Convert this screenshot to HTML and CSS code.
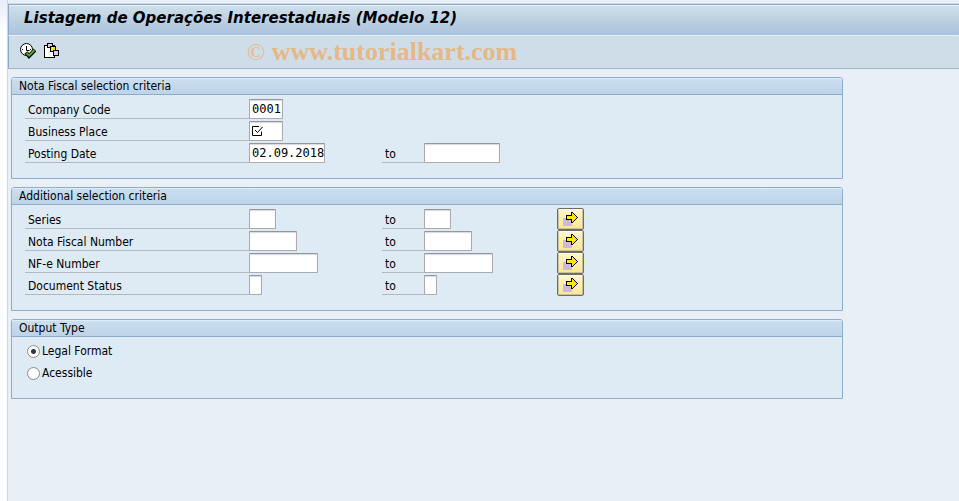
FILE: index.html
```html
<!DOCTYPE html>
<html lang="pt">
<head>
    <meta charset="UTF-8">
    <meta name="viewport" content="width=device-width, initial-scale=1.0">
    <link rel="stylesheet" href="styles.css">
    <title>Listagem de Operações Interestaduais (Modelo 12)</title>
</head>
<body>

    <svg class="defs" aria-hidden="true">
        <symbol id="arrow" viewBox="0 0 15 15" shape-rendering="crispEdges">
            <path fill="#cdb9dc" d="M0 6h9v8h-9z"/>
            <path fill="#000" d="M8 0h2v1h1v1h1v1h1v1h1v1h1v1h-1v1h-1v1h-1v1h-1v1h-1v1h-2v-3h-5v-5h5z"/>
            <path fill="#ffe600" d="M9 1h1v1h1v1h1v1h1v1h1v1h-1v1h-1v1h-1v1h-1v1h-1v-3h-5v-3h5z"/>
        </symbol>
    </svg>

    <div class="window">
        <header class="title-bar">
            <h1>Listagem de Operações Interestaduais (Modelo 12)</h1>
        </header>

        <div class="toolbar">
            <button class="tool-button" aria-label="Execute">
                <svg width="16" height="16" viewBox="0 0 16 16">
                    <circle cx="6.5" cy="6.5" r="6" fill="#fff" stroke="#000"/>
                    <path d="M6.5 3v4.5h3M2 6.500h1M6.5 10v1M10 6.500h1" fill="none" stroke="#000"/>
                    <path d="M6 9.500l3 3.5 6-6" fill="none" stroke="#000" stroke-width="4"/>
                    <path d="M6.500 10l2.500 2.500 5.500-5.500" fill="none" stroke="#4fae26" stroke-width="2"/>
                </svg>
            </button>
            <button class="tool-button" aria-label="Get Variant">
                <svg width="16" height="16" viewBox="0 0 16 16" shape-rendering="crispEdges">
                    <path d="M.5 2.500h10v12h-10z" fill="#fff" stroke="#000"/>
                    <path d="M3.500.5h5v4h-5z" fill="#d5d0e6" stroke="#000"/>
                    <path d="M6.500 3.500h5v5h-5z" fill="#ffe600" stroke="#000"/>
                    <path d="M9.500 7.500h5v5h-5z" fill="#d5d0e6" stroke="#000"/>
                </svg>
            </button>
            <p class="watermark"><span>©</span> www.tutorialkart.com</p>
        </div>

        <main>
            <section class="panel">
                <h2>Nota Fiscal selection criteria</h2>
                <div class="row">
                    <label for="company">Company Code</label>
                    <input id="company" class="w-code" value="0001">
                </div>
                <div class="row">
                    <label for="place">Business Place</label>
                    <div class="required">
                        <input id="place" class="w-code" required>
                        <svg class="required-mark" width="12" height="12" viewBox="0 0 12 12">
                            <path d="M8 1.500h-6.500v9h9v-4" fill="none" stroke="#000"/>
                            <path d="M4 5l2.500 2.500 5-5.500" fill="none" stroke="#000"/>
                        </svg>
                    </div>
                </div>
                <div class="row">
                    <label for="date">Posting Date</label>
                    <input id="date" class="w-date" value="02.09.2018">
                    <label for="date-to">to</label>
                    <input id="date-to" class="w-date">
                </div>
            </section>

            <section class="panel">
                <h2>Additional selection criteria</h2>
                <div class="row">
                    <label for="series">Series</label>
                    <input id="series" class="w-series">
                    <label for="series-to">to</label>
                    <input id="series-to" class="w-series">
                    <button class="more-button" aria-label="Multiple selection"><svg><use href="#arrow"/></svg></button>
                </div>
                <div class="row">
                    <label for="nota">Nota Fiscal Number</label>
                    <input id="nota" class="w-nota">
                    <label for="nota-to">to</label>
                    <input id="nota-to" class="w-nota">
                    <button class="more-button" aria-label="Multiple selection"><svg><use href="#arrow"/></svg></button>
                </div>
                <div class="row">
                    <label for="nfe">NF-e Number</label>
                    <input id="nfe" class="w-nfe">
                    <label for="nfe-to">to</label>
                    <input id="nfe-to" class="w-nfe">
                    <button class="more-button" aria-label="Multiple selection"><svg><use href="#arrow"/></svg></button>
                </div>
                <div class="row">
                    <label for="status">Document Status</label>
                    <input id="status" class="w-status">
                    <label for="status-to">to</label>
                    <input id="status-to" class="w-status">
                    <button class="more-button" aria-label="Multiple selection"><svg><use href="#arrow"/></svg></button>
                </div>
            </section>

            <section class="panel">
                <h2>Output Type</h2>
                <div class="option">
                    <input type="radio" name="output" id="legal" checked>
                    <label for="legal">Legal Format</label>
                </div>
                <div class="option">
                    <input type="radio" name="output" id="acessible">
                    <label for="acessible">Acessible</label>
                </div>
            </section>
        </main>
    </div>

</body>
</html>
```
FILE: styles.css
```css
* {
    margin: 0;
    padding: 0;
    box-sizing: border-box;
}

body {
    min-height: 100vh;
    display: flex;
    padding-left: 7px;
    background: linear-gradient(#eaf0f8 3px, #fcfdff 30px);
    font-family: "DejaVu Sans Condensed", "Noto Sans", sans-serif;
    font-size: 12px;
    color: #000;
}

.defs {
    position: absolute;
    width: 0;
    height: 0;
}

.window {
    flex: 1;
    padding-top: 4px;
    border-left: 1px solid #c9d6e6;
    background-color: #e8eff6;
}

.title-bar {
    height: 32px;
    padding-left: 15px;
    border-top: 1px solid #8ea9c8;
    border-bottom: 1px solid #e6f0f8;
    border-left: 1px solid #8ea9c8;
    box-shadow: inset 0 1px #e4eff7, 0 -1px #cfdae8;
    background: linear-gradient(#cfe0eb, #aac2dc);
}
.title-bar h1 {
    font-family: "DejaVu Sans", sans-serif;
    font-size: 15px;
    font-style: italic;
    line-height: 27px;
    white-space: nowrap;
}

.toolbar {
    height: 33px;
    display: flex;
    align-items: center;
    gap: 8px;
    padding-left: 11px;
    border-left: 1px solid #8ea9c8;
    border-bottom: 1px solid #a3b6d0;
    background-color: #cfdde8;
}
.tool-button {
    width: 16px;
    height: 16px;
    margin-bottom: 2px;
    border: none;
    background: none;
}
.tool-button svg {
    display: block;
}
.watermark {
    margin-left: 179px;
    font-family: "Liberation Serif", serif;
    font-size: 26px;
    font-weight: bold;
    line-height: 30px;
    white-space: nowrap;
    color: #e5b887;
}
.watermark span {
    font-weight: normal;
    font-size: 24px;
}

main {
    padding: 8px 3px;
    display: flex;
    flex-direction: column;
    gap: 8px;
}

.panel {
    max-width: 832px;
    padding-bottom: 14px;
    border: 1px solid #8eaccd;
    border-radius: 3px 3px 0 0;
    background-color: #deeaf4;
}
.panel h2 {
    height: 17px;
    margin-bottom: 3px;
    padding-left: 7px;
    border-bottom: 1px solid #8eaccd;
    border-radius: 2px 2px 0 0;
    box-shadow: inset 0 1px #e0ecf6;
    background: linear-gradient(#cbdff0, #bdd3e8);
    font-size: 12px;
    font-weight: normal;
    line-height: 16px;
}

.row {
    height: 22px;
    display: grid;
    grid-template-columns: 224px 133px 42px 133px 27px;
    align-items: center;
    padding-left: 13px;
}
.row label {
    height: 20px;
    padding-left: 3px;
    border-bottom: 1px solid #b4b8bc;
    line-height: 22px;
}
.row input {
    height: 20px;
    padding-left: 2px;
    border: 1px solid #a9abb0;
    border-top-color: #94969c;
    border-radius: 1px;
    box-shadow: inset 0 1px 1px #d8d8de;
    background-color: #fff;
    font-family: "DejaVu Sans Mono", monospace;
    font-size: 12px;
}
.w-code { width: 34px; }
.w-date { width: 76px; }
.w-series { width: 27px; }
.w-nota { width: 48px; }
.w-nfe { width: 69px; }
.w-status { width: 13px; }

.required {
    position: relative;
    display: flex;
}
.required-mark {
    position: absolute;
    left: 2px;
    top: 4px;
}

.more-button {
    height: 22px;
    display: flex;
    align-items: center;
    justify-content: center;
    border: 1px solid #6e6d68;
    border-radius: 2px;
    box-shadow: inset 0 1px #fffbe4, inset 0 0 0 1px #c9bf98;
    background: linear-gradient(#fff6cc, #fbe694);
}
.more-button svg {
    width: 15px;
    height: 15px;
}

.option {
    height: 22px;
    display: flex;
    align-items: center;
    gap: 2px;
    padding-left: 15px;
}
.option label {
    line-height: 16px;
}
.option input {
    appearance: none;
    width: 13px;
    height: 13px;
    border: 1px solid #8b8b8e;
    border-radius: 50%;
    background-color: #fff;
}
.option input:checked {
    background-image: radial-gradient(circle, #33334a 2px, transparent 3px);
}
```
